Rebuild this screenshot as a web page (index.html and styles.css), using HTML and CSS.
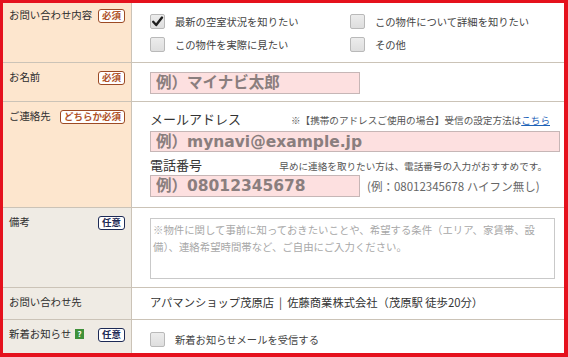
FILE: index.html
```html
<!DOCTYPE html>
<html lang="ja">
  <head>
    <meta charset="UTF-8" />
    <meta name="viewport" content="width=device-width, initial-scale=1.0" />
    <title>お問い合わせフォーム</title>
    <link rel="stylesheet" href="styles.css">
  </head>
  <body>
    <div class="form">
      <!-- お問い合わせ内容 -->
      <div class="row row-inquiry">
        <div class="head">
          <span class="label">お問い合わせ内容</span>
          <span class="badge req">必須</span>
        </div>
        <div class="body">
          <div class="checks">
            <label class="check">
              <span class="box">
                <svg width="13" height="13" viewBox="0 0 13 13"><path d="M2.2 6.8 L5.2 10 L11 2.6" fill="none" stroke="#1e1e1e" stroke-width="2.4" stroke-linecap="round" stroke-linejoin="round"/></svg>
              </span>
              最新の空室状況を知りたい
            </label>
            <label class="check"><span class="box"></span>この物件について詳細を知りたい</label>
            <label class="check"><span class="box"></span>この物件を実際に見たい</label>
            <label class="check"><span class="box"></span>その他</label>
          </div>
        </div>
      </div>

      <!-- お名前 -->
      <div class="row row-name">
        <div class="head">
          <span class="label">お名前</span>
          <span class="badge req">必須</span>
        </div>
        <div class="body">
          <input class="field short" type="text" placeholder="例）マイナビ太郎" />
        </div>
      </div>

      <!-- ご連絡先 -->
      <div class="row row-contact">
        <div class="head">
          <span class="label">ご連絡先</span>
          <span class="badge req">どちらか必須</span>
        </div>
        <div class="body">
          <div class="contact-line">
            <span class="field-name">メールアドレス</span>
            <span class="note">※【携帯のアドレスご使用の場合】受信の設定方法は<a href="#">こちら</a></span>
          </div>
          <input class="field wide" type="text" placeholder="例）mynavi@example.jp" />
          <div class="contact-line phone-line">
            <span class="field-name">電話番号</span>
            <span class="note">早めに連絡を取りたい方は、電話番号の入力がおすすめです。</span>
          </div>
          <div class="phone-row">
            <input class="field short" type="text" placeholder="例）08012345678" />
            <span class="example">(例：08012345678 ハイフン無し)</span>
          </div>
        </div>
      </div>

      <!-- 備考 -->
      <div class="row row-memo opt">
        <div class="head">
          <span class="label">備考</span>
          <span class="badge any">任意</span>
        </div>
        <div class="body">
          <textarea class="memo" placeholder="※物件に関して事前に知っておきたいことや、希望する条件（エリア、家賃帯、設備）、連絡希望時間帯など、ご自由にご入力ください。"></textarea>
        </div>
      </div>

      <!-- お問い合わせ先 -->
      <div class="row row-shop opt">
        <div class="head">
          <span class="label">お問い合わせ先</span>
        </div>
        <div class="body">
          <p class="shop">アパマンショップ茂原店 &nbsp;|&nbsp; 佐藤商業株式会社（茂原駅 徒歩20分）</p>
        </div>
      </div>

      <!-- 新着お知らせ -->
      <div class="row row-news opt">
        <div class="head">
          <span class="label">新着お知らせ <span class="help">?</span></span>
          <span class="badge any">任意</span>
        </div>
        <div class="body">
          <label class="check"><span class="box"></span>新着お知らせメールを受信する</label>
        </div>
      </div>
    </div>
  </body>
</html>
```

FILE: styles.css
```css
body {
  margin: 0;
  font-family: "Noto Sans CJK JP", sans-serif;
  color: #333;
  background-color: #fff;
}
.form {
  width: 561px;
  border-style: solid;
  border-color: #e5111d;
  border-width: 3px 4px 4px 3px;
}
.row {
  display: flex;
  box-sizing: border-box;
  border-bottom: 1px solid #cbc3b7;
}
.row:last-child {
  border-bottom: none;
}
.row-inquiry { height: 60px; }
.row-name { height: 39px; }
.row-contact { height: 106px; }
.row-memo { height: 80px; }
.row-shop { height: 32px; }
.row-news { height: 33px; }

.head {
  width: 129px;
  flex: none;
  box-sizing: border-box;
  padding: 7px 6px 0 6px;
  display: flex;
  justify-content: space-between;
  align-items: flex-start;
  background-color: #fde6ce;
  border-right: 1px solid #cbc3b7;
}
.row-inquiry .head {
  padding-top: 5px;
}
.opt .head {
  background-color: #efebe4;
}
.head .label {
  font-size: 10.4px;
  line-height: 14px;
  color: #2e2e2e;
  display: flex;
  align-items: center;
}
.badge {
  margin-top: 1px;
  height: 14px;
  box-sizing: border-box;
  padding: 0 3px;
  border: 1.5px solid #9c4a24;
  border-radius: 3px;
  background-color: #fff;
  color: #b0532a;
  font-size: 9.5px;
  font-weight: bold;
  line-height: 11px;
}
.badge.any {
  border-color: #1d2a55;
  color: #1d2a55;
}
.help {
  display: inline-block;
  width: 9px;
  height: 10px;
  margin-left: 4px;
  background-color: #3f913a;
  color: #fff;
  font-size: 8px;
  font-weight: bold;
  line-height: 10px;
  text-align: center;
}

.body {
  flex: 1;
  padding-left: 18px;
}
.checks {
  display: grid;
  grid-template-columns: 200px 200px;
  padding-top: 7px;
}
.check {
  display: flex;
  align-items: center;
  gap: 10px;
  height: 23px;
  font-size: 10.3px;
  color: #444;
}
.box {
  width: 15px;
  height: 15px;
  box-sizing: border-box;
  border: 1px solid #b9b9b9;
  border-radius: 2px;
  background: linear-gradient(#ececec, #dedede);
  display: flex;
  align-items: center;
  justify-content: center;
}

.field {
  box-sizing: border-box;
  display: block;
  height: 22px;
  margin: 0;
  padding: 0 5px;
  border: 1px solid #c6b6b6;
  background-color: #fde0e0;
  font-family: "DejaVu Sans", "Noto Sans CJK JP", sans-serif;
  font-size: 15.5px;
  font-weight: bold;
  color: #333;
  outline: none;
}
.field::placeholder {
  color: #8a7e7e;
}
.field.short {
  width: 210px;
}
.field.wide {
  width: 410px;
  height: 21px;
  margin-top: 2px;
}
.row-name .body {
  padding-top: 9px;
}

.row-contact .body {
  padding-top: 7px;
}
.contact-line {
  width: 410px;
  height: 20px;
  display: flex;
  justify-content: space-between;
  align-items: baseline;
}
.field-name {
  font-size: 13px;
  line-height: 20px;
  color: #333;
}
.note {
  font-size: 9.6px;
  color: #555;
  margin-right: 10px;
}
.note a {
  color: #1f63b8;
}
.phone-line {
  margin-top: 3px;
}
.phone-line .note {
  margin-right: 13px;
}
.phone-row {
  display: flex;
  align-items: center;
}
.example {
  margin-left: 7px;
  font-size: 11.5px;
  color: #666;
}

.row-memo .body {
  padding-top: 10px;
}
.memo {
  display: block;
  box-sizing: border-box;
  width: 405px;
  height: 61px;
  margin: 0;
  padding: 2px 2px;
  border: 1px solid #c9c9c9;
  resize: none;
  font-family: "Noto Sans CJK JP", sans-serif;
  font-size: 10.4px;
  line-height: 17px;
  color: #333;
}
.memo::placeholder {
  color: #a8a8a8;
}

.shop {
  margin: 0;
  padding-top: 6px;
  font-size: 11.3px;
  line-height: 16px;
  color: #333;
}
.row-news .body {
  padding-top: 8px;
}
```
